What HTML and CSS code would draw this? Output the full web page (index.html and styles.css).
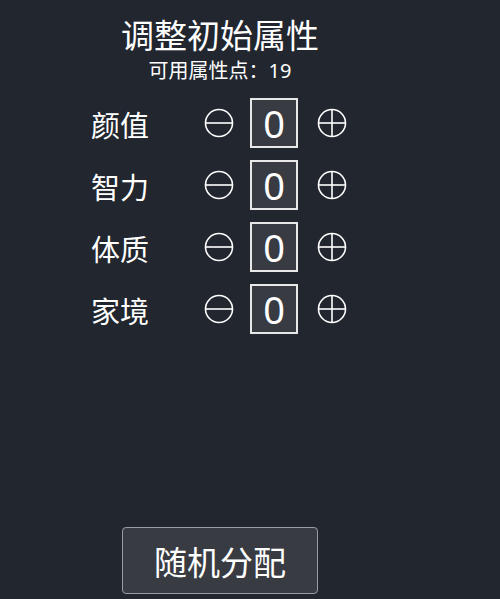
FILE: index.html
```html
<!DOCTYPE html>
<html lang="zh-CN">
<head>
    <meta charset="UTF-8">
    <meta name="viewport" content="width=device-width, initial-scale=1.0">
    <title>调整初始属性</title>
    <link rel="stylesheet" href="styles.css">
</head>
<body>
    <div class="panel">
        <h1 class="title">调整初始属性</h1>
        <div class="points">可用属性点：<span id="points">19</span></div>

        <div class="attr-list">
            <div class="attr-row">
                <div class="attr-name">颜值</div>
                <button class="step-btn" aria-label="减少">
                    <svg viewBox="0 0 30 30"><circle cx="15" cy="15" r="13.5"/><line x1="1.5" y1="15" x2="28.5" y2="15"/></svg>
                </button>
                <div class="attr-value">0</div>
                <button class="step-btn" aria-label="增加">
                    <svg viewBox="0 0 30 30"><circle cx="15" cy="15" r="13.5"/><line x1="1.5" y1="15" x2="28.5" y2="15"/><line x1="15" y1="1.5" x2="15" y2="28.5"/></svg>
                </button>
            </div>
            <div class="attr-row">
                <div class="attr-name">智力</div>
                <button class="step-btn" aria-label="减少">
                    <svg viewBox="0 0 30 30"><circle cx="15" cy="15" r="13.5"/><line x1="1.5" y1="15" x2="28.5" y2="15"/></svg>
                </button>
                <div class="attr-value">0</div>
                <button class="step-btn" aria-label="增加">
                    <svg viewBox="0 0 30 30"><circle cx="15" cy="15" r="13.5"/><line x1="1.5" y1="15" x2="28.5" y2="15"/><line x1="15" y1="1.5" x2="15" y2="28.5"/></svg>
                </button>
            </div>
            <div class="attr-row">
                <div class="attr-name">体质</div>
                <button class="step-btn" aria-label="减少">
                    <svg viewBox="0 0 30 30"><circle cx="15" cy="15" r="13.5"/><line x1="1.5" y1="15" x2="28.5" y2="15"/></svg>
                </button>
                <div class="attr-value">0</div>
                <button class="step-btn" aria-label="增加">
                    <svg viewBox="0 0 30 30"><circle cx="15" cy="15" r="13.5"/><line x1="1.5" y1="15" x2="28.5" y2="15"/><line x1="15" y1="1.5" x2="15" y2="28.5"/></svg>
                </button>
            </div>
            <div class="attr-row">
                <div class="attr-name">家境</div>
                <button class="step-btn" aria-label="减少">
                    <svg viewBox="0 0 30 30"><circle cx="15" cy="15" r="13.5"/><line x1="1.5" y1="15" x2="28.5" y2="15"/></svg>
                </button>
                <div class="attr-value">0</div>
                <button class="step-btn" aria-label="增加">
                    <svg viewBox="0 0 30 30"><circle cx="15" cy="15" r="13.5"/><line x1="1.5" y1="15" x2="28.5" y2="15"/><line x1="15" y1="1.5" x2="15" y2="28.5"/></svg>
                </button>
            </div>
        </div>

        <button class="random-btn">随机分配</button>
    </div>
</body>
</html>
```

FILE: styles.css
```css
body {
    margin: 0;
    background-color: #21262f;
    color: #ffffff;
    font-family: "Noto Sans", "Noto Sans CJK SC", sans-serif;
}
.panel {
    width: 440px;
    display: flex;
    flex-direction: column;
    align-items: center;
}
.title {
    margin: 14px 0 0;
    font-size: 33px;
    font-weight: normal;
    line-height: 44px;
}
.points {
    font-size: 20px;
    line-height: 24px;
    margin-top: 1px;
}
.attr-list {
    display: flex;
    flex-direction: column;
    margin-top: 9px;
}
.attr-row {
    display: flex;
    align-items: center;
    width: 258px;
    height: 62px;
}
.attr-name {
    width: 113px;
    font-size: 29px;
    line-height: 40px;
    padding-top: 6px;
}
.step-btn {
    width: 30px;
    height: 30px;
    padding: 0;
    border: none;
    background: none;
    cursor: pointer;
}
.step-btn svg {
    display: block;
    width: 30px;
    height: 30px;
    fill: none;
    stroke: #ffffff;
    stroke-width: 1.6;
}
.attr-value {
    width: 44px;
    height: 46px;
    margin: 0 19px 0 16px;
    border: 2px solid #e8e8e8;
    background-color: #383b42;
    font-size: 38px;
    line-height: 46px;
    text-align: center;
}
.random-btn {
    margin-top: 187px;
    width: 196px;
    height: 67px;
    background-color: #383b42;
    color: #ffffff;
    border: 1px solid #9a9da3;
    border-radius: 4px;
    font-family: "Noto Sans CJK SC", sans-serif;
    font-size: 33px;
    cursor: pointer;
}
```
